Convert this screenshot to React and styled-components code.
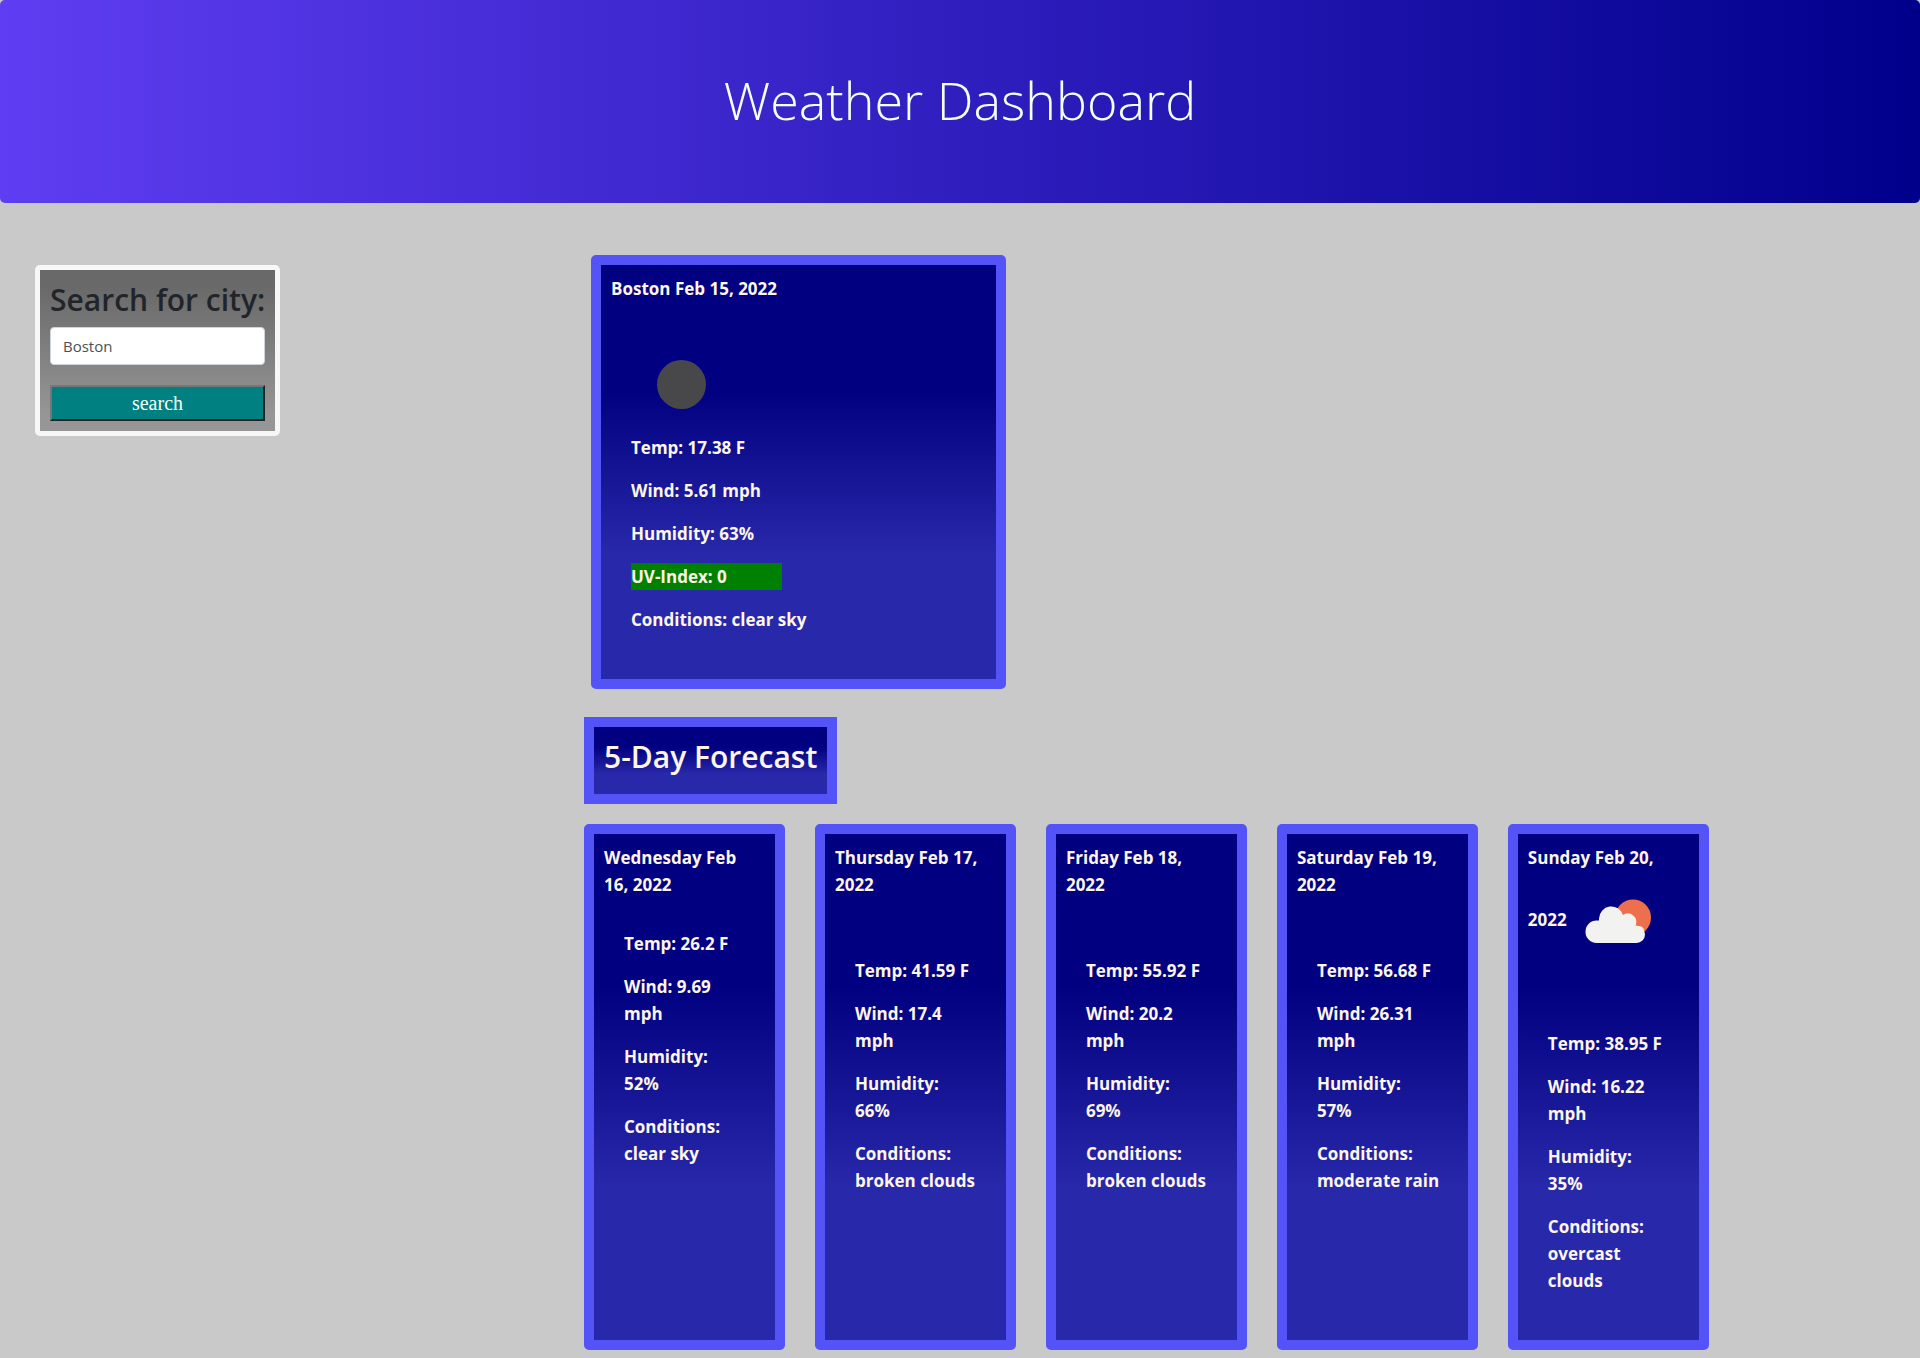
import React from "react";
import styled, { createGlobalStyle } from "styled-components";

const GlobalStyle = createGlobalStyle`
  *, *::before, *::after { box-sizing: border-box; }
  body {
    margin: 0;
    background: #c9c9c9;
    color: #212529;
    font-family: "Open Sans", "Noto Sans", sans-serif;
    font-size: 17px;
    line-height: 27px;
  }
  h1, h2, h3, p, ul { margin: 0; padding: 0; }
`;

const Hero = styled.header`
  padding: 64px 32px 67px;
  border-radius: 5px;
  background: linear-gradient(to right, #5f3df2, #00008b);
  color: #f5fffa;
  text-align: center;
`;

const Title = styled.h1`
  font-size: 52px;
  font-weight: 300;
  line-height: 72px;
`;

const Page = styled.div`
  display: grid;
  grid-template-columns: 30% 1fr 11%;
  padding: 52px 0 8px;
`;

const Aside = styled.aside`
  padding: 10px 35px;
`;

const SearchForm = styled.form`
  display: flex;
  flex-direction: column;
  width: 245px;
  padding: 10px;
  border: 5px solid #f7f7f7;
  border-radius: 5px;
  background: linear-gradient(dimgray 10%, #969696 90%);
`;

const SearchLabel = styled.label`
  margin-bottom: 8px;
  font-size: 30px;
  font-weight: 600;
  line-height: 39px;
  white-space: nowrap;
`;

const SearchInput = styled.input`
  width: 100%;
  height: 38px;
  margin-bottom: 20px;
  padding: 6px 12px;
  border: 1px solid #ced4da;
  border-radius: 4px;
  background: #fff;
  color: #495057;
  font: 15px/24px "Open Sans", "Noto Sans", sans-serif;
`;

const SearchButton = styled.button`
  height: 36px;
  padding: 0;
  border: 2px solid;
  border-color: #767676 #212121 #212121 #767676;
  background: teal;
  color: #f5fffa;
  font: 20px/27px "Liberation Serif", serif;
`;

const Main = styled.main`
  display: flex;
  flex-direction: column;
  align-items: flex-start;
  padding-left: 8px;
`;

const Panel = styled.section`
  padding: 10px;
  border: 10px solid #5353f7;
  border-radius: ${(p) => (p.$square ? "0" : "5px")};
  background: linear-gradient(navy 30%, #2828aa 70%);
  color: #fdf5e6;
`;

const CurrentPanel = styled(Panel)`
  width: 100%;
  max-width: 415px;
  margin: 0 0 28px 7px;
  font-weight: 700;
`;

const CurrentBody = styled.div`
  width: 191px;
  white-space: nowrap;
`;

const DateHeading = styled.h3`
  font-size: 17px;
  font-weight: 700;
  line-height: 27px;
`;

const Readings = styled.ul`
  padding: 0 20px 20px;
  margin-top: ${(p) => (p.$gap ? `${p.$gap}px` : "0")};
  list-style: none;
`;

const Reading = styled.li`
  margin-bottom: 16px;
  background: ${(p) => (p.$uv ? "green" : "transparent")};
`;

const CurrentIcon = styled.svg`
  display: block;
  width: 100px;
  height: 100px;
  margin: 32px 0 0 20px;
`;

const InlineIcon = styled.svg`
  width: 100px;
  height: 100px;
  vertical-align: middle;
`;

const ForecastTitle = styled.h2`
  margin-bottom: 8px;
  font-size: 30px;
  font-weight: 600;
  line-height: 39px;
`;

const Forecast = styled.div`
  display: grid;
  grid-template-columns: repeat(5, 1fr);
  gap: 30px;
  width: 100%;
  margin-top: 20px;
`;

const DayPanel = styled(Panel).attrs({ as: "article" })`
  min-width: 0;
  font-weight: 700;
`;

const DayLine = styled.span`
  display: block;
  white-space: nowrap;
`;

const days = [
  { date: ["Wednesday Feb", "16, 2022"], temp: "26.2", wind: "9.69", humidity: 52, sky: ["clear sky"], gap: 32 },
  { date: ["Thursday Feb 17,", "2022"], temp: "41.59", wind: "17.4", humidity: 66, sky: ["broken clouds"], gap: 59 },
  { date: ["Friday Feb 18,", "2022"], temp: "55.92", wind: "20.2", humidity: 69, sky: ["broken clouds"], gap: 59 },
  { date: ["Saturday Feb 19,", "2022"], temp: "56.68", wind: "26.31", humidity: 57, sky: ["moderate rain"], gap: 59 },
  { date: ["Sunday Feb 20,", "2022"], temp: "38.95", wind: "16.22", humidity: 35, sky: ["overcast", "clouds"], gap: 59, icon: true },
];

function ClearNightIcon() {
  return (
    <CurrentIcon viewBox="0 0 100 100" role="img" aria-label="clear sky">
      <circle cx="50.5" cy="50.5" r="24.5" fill="#48484a" />
    </CurrentIcon>
  );
}

function CloudSunIcon() {
  return (
    <InlineIcon viewBox="0 0 100 100" role="img" aria-label="overcast clouds">
      <circle cx="66" cy="46.5" r="18" fill="#ee6f4d" />
      <path
        fill="#f2f2f0"
        stroke="#ee5a34"
        strokeWidth="1"
        d="M55 46.500a8.500 8.500 0 0 1 14 8 9 9 0 0 1 9.500 5"
      />
      <path
        fill="#f2f2f0"
        d="M29.500 72a11 11 0 0 1-11-11.500 11 11 0 0 1 11-11h2.500v-2a12.300 12.300 0 0 1 24-3.500a8.500 8.500 0 0 1 12.500 10.500 9 9 0 0 1 9.500 9 8.500 8.500 0 0 1-8.500 8.500z"
      />
    </InlineIcon>
  );
}

function Lines({ items }) {
  return items.map((t) => <DayLine key={t}>{t}</DayLine>);
}

export default function App() {
  return (
    <>
      <GlobalStyle />
      <Hero>
        <Title>Weather Dashboard</Title>
      </Hero>
      <Page>
        <Aside>
          <SearchForm onSubmit={(e) => e.preventDefault()}>
            <SearchLabel htmlFor="city">Search for city:</SearchLabel>
            <SearchInput id="city" type="text" defaultValue="Boston" />
            <SearchButton type="submit">search</SearchButton>
          </SearchForm>
        </Aside>
        <Main>
          <CurrentPanel>
            <CurrentBody>
              <DateHeading>Boston Feb 15, 2022</DateHeading>
              <ClearNightIcon />
              <Readings>
                <Reading>Temp: 17.38 F</Reading>
                <Reading>Wind: 5.61 mph</Reading>
                <Reading>Humidity: 63%</Reading>
                <Reading $uv>UV-Index: 0</Reading>
                <Reading>Conditions: clear sky</Reading>
              </Readings>
            </CurrentBody>
          </CurrentPanel>
          <Panel $square>
            <ForecastTitle>5-Day Forecast</ForecastTitle>
          </Panel>
          <Forecast>
            {days.map((d) => (
              <DayPanel key={d.date[0]}>
                <DateHeading>
                  <DayLine>{d.date[0]}</DayLine>
                  <DayLine>
                    {d.date[1]}
                    {d.icon && <CloudSunIcon />}
                  </DayLine>
                </DateHeading>
                <Readings $gap={d.gap}>
                  <Reading>
                    <DayLine>Temp: {d.temp} F</DayLine>
                  </Reading>
                  <Reading>
                    <Lines items={[`Wind: ${d.wind}`, "mph"]} />
                  </Reading>
                  <Reading>
                    <Lines items={["Humidity:", `${d.humidity}%`]} />
                  </Reading>
                  <Reading>
                    <Lines items={["Conditions:", ...d.sky]} />
                  </Reading>
                </Readings>
              </DayPanel>
            ))}
          </Forecast>
        </Main>
      </Page>
    </>
  );
}
